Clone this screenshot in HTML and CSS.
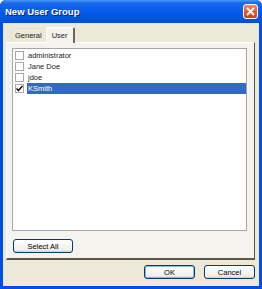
FILE: index.html
```html
<!DOCTYPE html>
<html lang="en">

<head>
    <meta charset="UTF-8">
    <title>New User Group</title>
    <link rel="stylesheet" href="styles.css">
</head>

<body>
    <div class="window">
        <div class="titlebar">
            <span class="title">New User Group</span>
            <button class="close">
                <svg width="9" height="9" viewBox="0 0 9 9">
                    <path d="M1 1 L8 8 M8 1 L1 8" stroke="#fff" stroke-width="1.8" />
                </svg>
            </button>
        </div>

        <div class="client">
            <div class="tabs">
                <div class="tab">General</div>
                <div class="tab active">User</div>
            </div>

            <div class="panel">
                <div class="list">
                    <div class="row"><span class="check"></span><span class="label">administrator</span></div>
                    <div class="row"><span class="check"></span><span class="label">Jane Doe</span></div>
                    <div class="row"><span class="check"></span><span class="label">jdoe</span></div>
                    <div class="row selected">
                        <span class="check">
                            <svg width="7" height="7" viewBox="0 0 7 7">
                                <path d="M0.5 3.5 L2.5 5.5 L6.5 1" stroke="#000" stroke-width="1.4" fill="none" />
                            </svg>
                        </span>
                        <span class="label">KSmith</span>
                    </div>
                </div>
                <button class="btn select-all">Select All</button>
            </div>

            <div class="actions">
                <button class="btn default">OK</button>
                <button class="btn">Cancel</button>
            </div>
        </div>
    </div>
</body>

</html>
```

FILE: styles.css
```css
body {
    margin: 0;
    padding: 0;
    font-family: "Liberation Sans", Arial, sans-serif;
    font-size: 7.5px;
    color: #000;
}

.window {
    width: 262px;
    height: 289px;
    box-sizing: border-box;
    display: flex;
    flex-direction: column;
    background-color: #0050e0;
    border: 3px solid #0050e0;
    border-top: none;
    border-radius: 6px 6px 0 0;
}

.titlebar {
    height: 23px;
    margin: 0 -3px;
    padding: 0 4px 0 5px;
    display: flex;
    align-items: center;
    justify-content: space-between;
    border-radius: 6px 6px 0 0;
    background: linear-gradient(#4a9af8 0, #1a68e8 3px, #0a60ec 40%, #0058e6 70%, #004ed8 100%);
}

.title {
    color: #fff;
    font-weight: bold;
    font-size: 9.5px;
    text-shadow: 1px 1px 0 #0a1e80;
}

.close {
    width: 15px;
    height: 15px;
    padding: 0;
    display: flex;
    align-items: center;
    justify-content: center;
    border: 1px solid #fff;
    border-radius: 3px;
    background: linear-gradient(#ef8a63, #e0552c 60%, #c9411c);
}

.client {
    flex: 1;
    display: flex;
    flex-direction: column;
    background-color: #ece9d8;
    padding: 3px 4px 7px 3px;
}

.tabs {
    display: flex;
    align-items: flex-end;
    height: 16px;
    padding-left: 5px;
}

.tab {
    height: 13px;
    line-height: 13px;
    padding: 0 3px;
    color: #222;
    border: 1px solid #e4e1d0;
    border-bottom: none;
    border-radius: 2px 2px 0 0;
}

.tab.active {
    height: 15px;
    line-height: 15px;
    padding: 0 5px;
    margin-bottom: -1px;
    position: relative;
    background-color: #f4f3ee;
    border-color: #fff;
    border-right: 2px solid #6a6858;
}

.panel {
    height: 218px;
    box-sizing: border-box;
    background-color: #f4f3ee;
    border: 1px solid #fff;
    border-right: 1px solid #5a5848;
    border-bottom: 2px solid #5a5848;
    padding: 5px 7px 5px 5px;
    display: flex;
    flex-direction: column;
}

.list {
    height: 184px;
    background-color: #fff;
    border: 1px solid #a6a6a6;
    padding-top: 1px;
}

.row {
    height: 11px;
    display: flex;
    align-items: center;
    color: #222;
}

.check {
    width: 7px;
    height: 7px;
    margin: 0 3px 0 2px;
    border: 1px solid #a8a8a8;
    background-color: #fff;
    display: flex;
    align-items: center;
    justify-content: center;
}

.label {
    padding-left: 1px;
    line-height: 11px;
}

.row.selected .label {
    flex: 1;
    background-color: #316ac5;
    color: #fff;
}

.btn {
    font-family: "Liberation Sans", Arial, sans-serif;
    font-size: 7.5px;
    height: 14px;
    padding: 0;
    color: #000;
    border: 1px solid #003c74;
    border-radius: 3px;
    background: linear-gradient(#fff, #f1f0ea 80%, #d6d0c5);
}

.select-all {
    width: 60px;
    margin-top: 8px;
    margin-left: 1px;
}

.actions {
    margin-top: auto;
    display: flex;
    justify-content: flex-end;
    gap: 9px;
}

.actions .btn {
    width: 51px;
}

.btn.default {
    box-shadow: inset 0 0 0 1px #8eb4f0;
}
```
